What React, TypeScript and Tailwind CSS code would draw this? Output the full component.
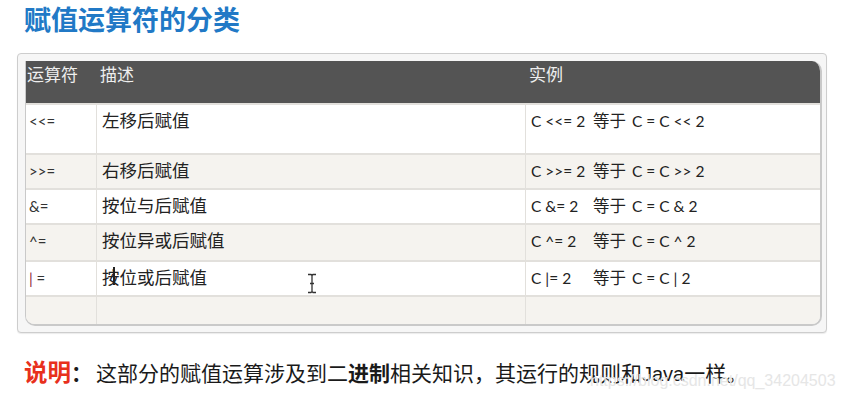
const cjk = "font-['Noto_Sans_CJK_SC','Noto_Sans',sans-serif]";

type Row = { op: React.ReactNode; desc: React.ReactNode; left: string; right: React.ReactNode; h: string; bg: string };

const rows: Row[] = [
  { op: "<<=", desc: "左移后赋值", left: "C <<= 2", right: "C = C << 2", h: "h-[50px]", bg: "bg-white" },
  { op: ">>=", desc: "右移后赋值", left: "C >>= 2", right: "C = C >> 2", h: "h-[35px]", bg: "bg-[#f5f3ef]" },
  { op: "&=", desc: "按位与后赋值", left: "C &= 2", right: "C = C & 2", h: "h-[35px]", bg: "bg-white" },
  { op: "^=", desc: "按位异或后赋值", left: "C ^= 2", right: "C = C ^ 2", h: "h-[37px]", bg: "bg-[#f5f3ef]" },
  {
    op: (
      <>
        <span className="text-[#8a1f3c]">|</span> =
      </>
    ),
    desc: (
      <span className="relative">
        按位或后赋值
        <span className="absolute left-[11px] top-[3px] h-[18px] w-[2px] bg-[#222]" />
      </span>
    ),
    left: "C |= 2",
    right: "C = C | 2",
    h: "h-[35px]",
    bg: "bg-white",
  },
];

function IBeam() {
  return (
    <svg className="absolute left-[306px] top-[273px]" width="12" height="21" viewBox="0 0 12 21">
      <path d="M2 1.5h3l1 1 1-1h3M6 2.5v16M2 19.5h3l1-1 1 1h3M4 10.5h4" fill="none" stroke="#333" strokeWidth="1.3" />
    </svg>
  );
}

export default function App() {
  return (
    <div className="relative w-[842px] h-[397px] overflow-hidden bg-white">
      {/* title */}
      <h1 className={`${cjk} pl-[24px] h-[53px] text-[27px] leading-[38px] font-bold text-[#2179c6]`}>
        赋值运算符的分类
      </h1>

      {/* table frame */}
      <div className="ml-[17px] w-[810px] h-[280px] rounded-[4px] border border-[#cdcdcd] bg-[#f6f6f6] pl-[7px] pt-[7px] pr-[5px] shadow-[0_1px_1px_rgba(0,0,0,0.08)]">
        <div className="w-[797px] h-[265px] overflow-hidden rounded-tr-[10px] rounded-bl-[10px] rounded-br-[10px] border-2 border-[#c9c9c9] border-t-0 border-l">
          <div className={`${cjk} flex h-[42px] bg-[#545454] text-[17px] leading-[24px] text-[#eeeeee]`}>
            <div className="w-[71px] pl-[1px] pt-[1px]">运算符</div>
            <div className="w-[429px] pl-[3px] pt-[1px]">描述</div>
            <div className="flex-1 pl-[3px] pt-[1px]">实例</div>
          </div>
          {rows.map((r, i) => (
            <div key={i} className={`flex ${r.h} ${r.bg} border-t-2 border-[#e2e0dc]`}>
              <div className="w-[71px] border-r border-[#e2e0dc] pl-[3px] pt-[6px] text-[15px] leading-[20px] text-[#333] font-['Lato',sans-serif] whitespace-pre">
                {r.op}
              </div>
              <div className={`${cjk} w-[429px] border-r border-[#e2e0dc] pl-[5px] pt-[3px] text-[17.5px] leading-[24px] text-[#222]`}>
                {r.desc}
              </div>
              <div className="flex-1 pl-[5px] pt-[4px] flex items-start text-[#222] whitespace-pre">
                <span className="w-[62px] font-['Lato',sans-serif] text-[15.5px] leading-[24px]">{r.left}</span>
                <span className={`${cjk} text-[16.5px] leading-[22px]`}>等于</span>
                <span className="pl-[6px] font-['Lato',sans-serif] text-[15.5px] leading-[24px]">{r.right}</span>
              </div>
            </div>
          ))}
          <div className="flex h-[30px] bg-[#f5f3ef] border-t-2 border-[#e2e0dc]">
            <div className="w-[71px] border-r border-[#e2e0dc]" />
            <div className="w-[429px] border-r border-[#e2e0dc]" />
            <div className="flex-1" />
          </div>
        </div>
      </div>

      {/* note */}
      <p className={`${cjk} mt-[24px] pl-[24px] flex items-baseline text-[21px] leading-[28px] text-[#1a1a1a] whitespace-nowrap`}>
        <span className="font-bold text-[23.5px] text-[#e8301c]">说明</span>
        <span className="font-bold w-[25px]">：</span>
        <span>
          这部分的赋值运算涉及到二<span className="font-bold">进制</span>相关知识，其运行的规则和
          <span className="font-['Liberation_Sans',sans-serif] text-[20px]">Java</span>一样。
        </span>
      </p>
      <div className="absolute left-[590px] top-[369px] font-['Liberation_Sans',sans-serif] text-[16px] text-[#e6e6e6]">
        https://blog.csdn.net/qq_34204503
      </div>

      <IBeam />
    </div>
  );
}
